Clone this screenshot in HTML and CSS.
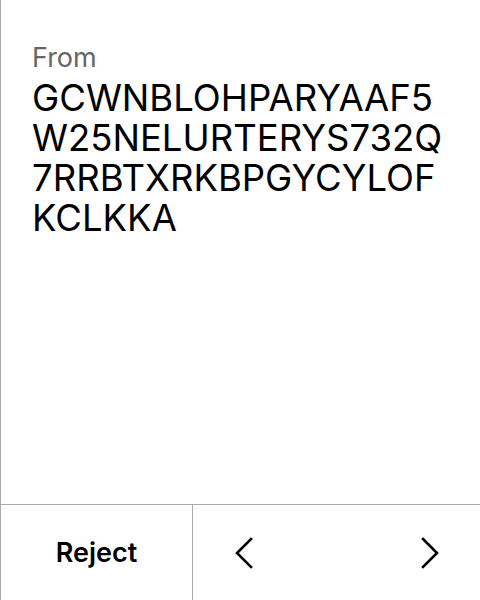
FILE: index.html
```html
<!DOCTYPE html>
<html>
<head>
<meta charset="utf-8">
<link rel="stylesheet" href="styles.css">
</head>
<body>
<div class="screen">
  <div class="content">
    <div class="label">From</div>
    <div class="address">GCWNBLOHPARYAAF5W25NELURTERYS732Q7RRBTXRKBPGYCYLOFKCLKKA</div>
  </div>
  <div class="bar">
    <div class="reject">Reject</div>
    <div class="nav">
      <div class="navbtn">
        <svg width="20" height="32" viewBox="0 0 20 32"><polyline points="17,2 3,16 17,30" fill="none" stroke="#000" stroke-width="2.6" stroke-linecap="square"/></svg>
      </div>
      <div class="navbtn">
        <svg width="20" height="32" viewBox="0 0 20 32"><polyline points="3,2 17,16 3,30" fill="none" stroke="#000" stroke-width="2.6" stroke-linecap="square"/></svg>
      </div>
    </div>
  </div>
</div>
</body>
</html>
```

FILE: styles.css
```css
html, body {
  margin: 0;
  padding: 0;
  background: #fff;
}
.screen {
  width: 480px;
  height: 600px;
  box-sizing: border-box;
  border-left: 1px solid #aaa;
  display: flex;
  flex-direction: column;
  font-family: Inter, "Noto Sans", sans-serif;
  color: #000;
}
.content {
  flex: 1;
  padding: 42px 30px 0 31px;
}
.label {
  font-size: 27px;
  line-height: 32px;
  color: #666;
}
.address {
  margin-top: 4px;
  font-size: 36.5px;
  line-height: 40px;
  word-break: break-all;
}
.bar {
  height: 96px;
  box-sizing: border-box;
  border-top: 1px solid #aaa;
  display: flex;
}
.reject {
  width: 191px;
  border-right: 1px solid #aaa;
  display: flex;
  align-items: center;
  justify-content: center;
  font-size: 27px;
  font-weight: 600;
}
.nav {
  flex: 1;
  display: flex;
  justify-content: space-between;
}
.navbtn {
  width: 101px;
  display: flex;
  align-items: center;
  justify-content: center;
}
```
